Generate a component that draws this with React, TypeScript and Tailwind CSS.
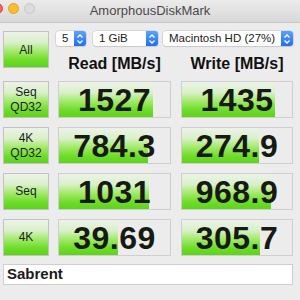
const green =
  "bg-[linear-gradient(to_bottom,#edf2ea_0%,#d9f0c9_30%,#a2ea69_55%,#6fdc2a_80%,#5cd418_100%)]";

type Row = { label: string[]; read: string; readW: number; write: string; writeW: number };

const rows: Row[] = [
  { label: ["Seq", "QD32"], read: "1527", readW: 94, write: "1435", writeW: 93 },
  { label: ["4K", "QD32"], read: "784.3", readW: 89, write: "274.9", writeW: 77 },
  { label: ["Seq"], read: "1031", readW: 90, write: "968.9", writeW: 89 },
  { label: ["4K"], read: "39.69", readW: 59, write: "305.7", writeW: 78 },
];

function Stepper() {
  return (
    <div className="flex h-full w-[12px] items-center justify-center rounded-r-[3px] bg-[linear-gradient(to_bottom,#5aa2ff,#1f6ff2)]">
      <svg width="8" height="12" viewBox="0 0 8 12" fill="none" stroke="white" strokeWidth="1.3">
        <path d="M1.5 4.5 L4 2 L6.5 4.5" />
        <path d="M1.5 7.5 L4 10 L6.5 7.5" />
      </svg>
    </div>
  );
}

function Select({ text, width }: { text: string; width: string }) {
  return (
    <div
      className={`flex h-[15px] ${width} items-center rounded-[3px] bg-white shadow-[0_0_0_0.5px_#c4c4c4,0_1px_1px_rgba(0,0,0,0.12)]`}
    >
      <span className="flex-1 pl-[6px] text-[11.5px] leading-none text-[#222]">{text}</span>
      <Stepper />
    </div>
  );
}

function LabelButton({ lines }: { lines: string[] }) {
  return (
    <div
      className={`flex h-[37px] w-[46px] flex-col items-center justify-center border border-[#c2c2c2] ${green} text-[12px] leading-[15px] text-[#1c1c1c]`}
    >
      {lines.map((l) => (
        <span key={l}>{l}</span>
      ))}
    </div>
  );
}

function Cell({ value, width, w }: { value: string; width: number; w: string }) {
  return (
    <div className={`relative h-[37px] ${w} border border-[#cfcfcf] bg-[#ececec]`}>
      <div className={`h-full ${green}`} style={{ width }} />
      <div className="absolute inset-0 flex items-center justify-center text-[32px] font-bold leading-none tracking-[0.5px] text-[#161a12]">
        {value}
      </div>
    </div>
  );
}

export default function App() {
  return (
    <div
      className="h-[300px] w-[300px] overflow-hidden bg-[#ececec]"
      style={{ fontFamily: '"Liberation Sans", Arial, sans-serif' }}
    >
      {/* Title bar */}
      <div className="relative flex h-[23px] items-center justify-center border-b border-[#c9c9c9] bg-[linear-gradient(to_bottom,#ebebeb,#d8d8d8)]">
        <div className="absolute left-[-8px] top-[3px] flex gap-[5px]">
          <span className="h-[11px] w-[11px] rounded-full border border-[#e2463f] bg-[#fe5f57]" />
          <span className="h-[11px] w-[11px] rounded-full border border-[#e1a12a] bg-[#febc2e]" />
          <span className="h-[11px] w-[11px] rounded-full border border-[#c8c8c8] bg-[#dcdcdc]" />
        </div>
        <span className="text-[13px] text-[#4a4a4a]">AmorphousDiskMark</span>
      </div>

      <div className="flex flex-col gap-[9px] pl-[3px] pt-[8px]">
        {/* Top row */}
        <div className="flex">
          <div
            className={`flex h-[37px] w-[46px] items-center justify-center border border-[#c2c2c2] ${green} text-[12px] text-[#1c1c1c]`}
          >
            All
          </div>
          <div className="ml-[7px] flex flex-col">
            <div className="flex gap-[7px]">
              <Select text="5" width="w-[30px]" />
              <Select text="1 GiB" width="w-[65px]" />
              <div className="ml-[-2px]">
                <Select text="Macintosh HD (27%)" width="w-[130px]" />
              </div>
            </div>
            <div className="mt-[10px] flex pl-[2px] text-[16px] font-bold leading-none text-[#111]">
              <span className="w-[113px] text-center">Read [MB/s]</span>
              <span className="ml-[10px] w-[112px] text-center">Write [MB/s]</span>
            </div>
          </div>
        </div>

        {rows.map((r) => (
          <div key={r.read} className="flex">
            <LabelButton lines={r.label} />
            <div className="ml-[9px]">
              <Cell value={r.read} width={r.readW} w="w-[113px]" />
            </div>
            <div className="ml-[10px]">
              <Cell value={r.write} width={r.writeW} w="w-[112px]" />
            </div>
          </div>
        ))}

        {/* Comment field */}
        <div className="-mt-[1px] flex h-[21px] w-[290px] items-center border border-[#cfcfcf] bg-white pl-[3px] text-[15px] font-bold text-[#1a1a1a]">
          Sabrent
        </div>
      </div>
    </div>
  );
}
